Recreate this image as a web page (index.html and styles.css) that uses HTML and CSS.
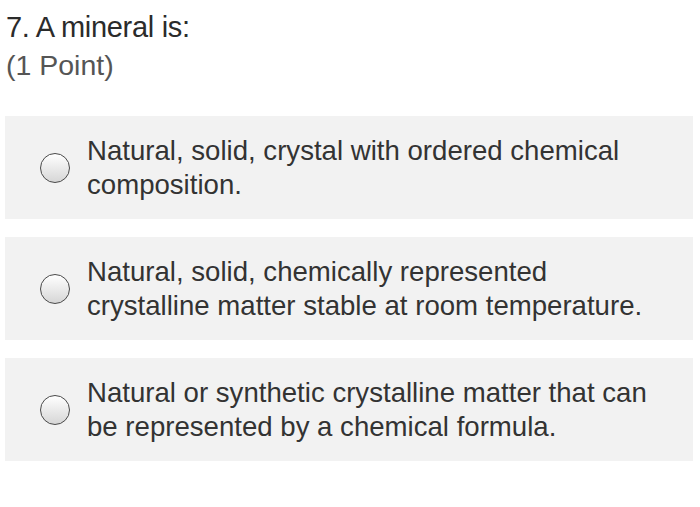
FILE: index.html
```html
<!DOCTYPE html>
<html>
<head>
<meta charset="utf-8">
<link rel="stylesheet" href="styles.css">
</head>
<body>
<div class="question">
  <div class="title">7. A mineral is:</div>
  <div class="points">(1 Point)</div>
  <div class="options">
    <label class="option">
      <span class="radio"></span>
      <span class="text">Natural, solid, crystal with ordered chemical composition.</span>
    </label>
    <label class="option">
      <span class="radio"></span>
      <span class="text">Natural, solid, chemically represented crystalline matter stable at room temperature.</span>
    </label>
    <label class="option">
      <span class="radio"></span>
      <span class="text">Natural or synthetic crystalline matter that can be represented by a chemical formula.</span>
    </label>
  </div>
</div>
</body>
</html>
```
FILE: styles.css
```css
html, body {
  margin: 0;
  padding: 0;
  background: #ffffff;
}
body {
  font-family: "Liberation Sans", Arial, sans-serif;
  color: #333333;
}
.question {
  padding: 9px 7px 0 5px;
}
.title {
  font-size: 29px;
  line-height: 37px;
  padding-left: 1px;
  color: #2b2b2b;
  letter-spacing: -0.3px;
}
.points {
  font-size: 28.5px;
  line-height: 38px;
  padding-left: 1px;
  color: #555555;
}
.options {
  margin-top: 32px;
  display: flex;
  flex-direction: column;
  gap: 18px;
}
.option {
  background: #f2f2f2;
  height: 103px;
  display: flex;
  align-items: center;
  padding-left: 35px;
  box-sizing: border-box;
}
.radio {
  flex: none;
  width: 28px;
  height: 28px;
  border: 1.5px solid #4a4a4a;
  border-radius: 50%;
  background: linear-gradient(#ffffff, #d6d6d6);
  margin-right: 17px;
}
.text {
  font-size: 27.6px;
  line-height: 34px;
  color: #333333;
  width: 572px;
}
```
